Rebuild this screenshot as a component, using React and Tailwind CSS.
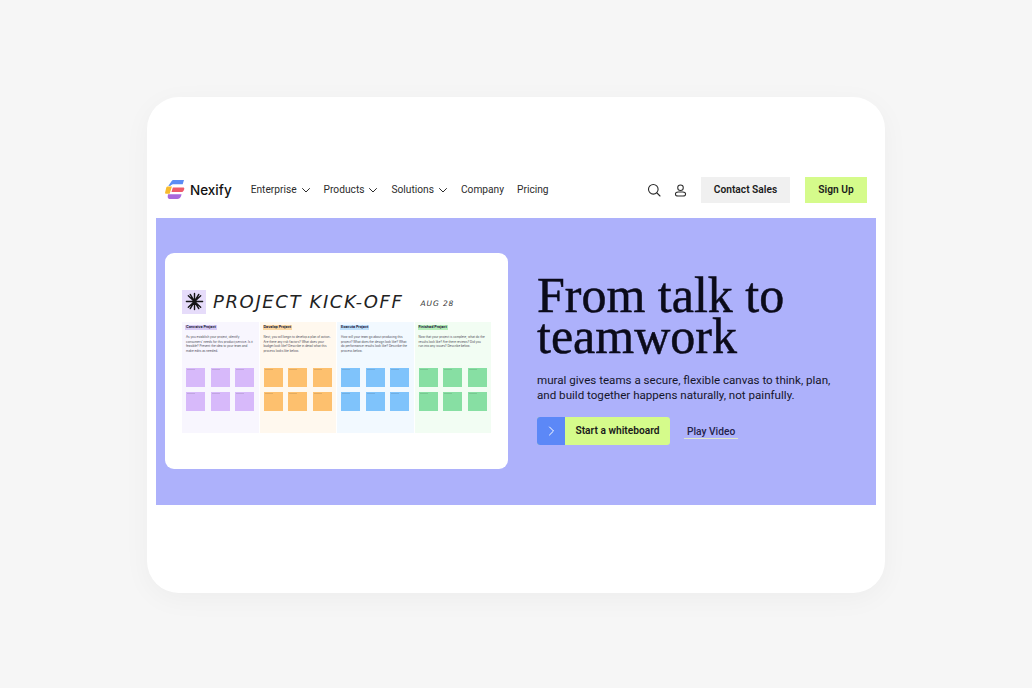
const sans = "font-['Roboto',sans-serif]";

function Chevron() {
  return (
    <svg viewBox="0 0 10 10" className="w-[10px] h-[10px]" fill="none" stroke="currentColor" strokeWidth="1" strokeLinecap="round" strokeLinejoin="round">
      <path d="M1.500 3.500L5 7l3.500-3.500" />
    </svg>
  );
}

function Logo() {
  return (
    <svg viewBox="0 0 20 20" className="w-[20px] h-[20px]">
      <path d="M6.500 1.200C7 .500 7.700 0 8.700 0H19l-1.300 4.300H8.600c-1.300 0-2.300.5-3 1.500L3.300 6.100z" fill="#5b8cf5" />
      <path d="M2.600 6.500h4.300L4.700 13.800H1.200c-.8 0-1.300-.7-1.100-1.400l1.200-4.800C1.500 6.900 2 6.500 2.600 6.500z" fill="#f7bb2e" />
      <path d="M7.800 7.500H18.200c.8 0 1.300.7 1.100 1.400l-.6 1.600c-.3.900-1.100 1.500-2 1.500H6.500z" fill="#ee5b6b" />
      <path d="M3 14.200H16.600l-.6 2c-.5 1.600-1.900 2.800-3.700 2.800H5c-1.500 0-2.500-1.200-2.300-2.600z" fill="#a968dd" />
    </svg>
  );
}

function NavItem({ label, chevron }) {
  return (
    <span className="flex items-center gap-[4px] text-[10.200px] text-[#2c2c2c]">
      {label}
      {chevron && <Chevron />}
    </span>
  );
}

function Column({ title, titleBg, bg, sticky, lines }) {
  const notes = [0, 1, 2, 3, 4, 5];
  return (
    <div className={`w-[77px] h-[111px] flex flex-col px-[4px] pt-[3px] ${bg}`}>
      <span className={`self-start -ml-[1px] px-[1px] text-[3.600px] leading-[5px] font-bold text-[#252540] font-['Inter',sans-serif] ${titleBg}`}>{title}</span>
      <p className="mt-[5px] whitespace-pre text-[3px] leading-[4.700px] text-[#4a4a55] h-[21px] font-['Inter',sans-serif]">{lines}</p>
      <div className="mt-[12px] grid grid-cols-3 gap-x-[5px] gap-y-[5px]">
        {notes.map((n) => (
          <div key={n} className={`w-[19px] h-[19px] pl-[1px] pt-[1px] ${sticky}`}>
            <div className="w-[8px] h-[1px] bg-black/10" />
          </div>
        ))}
      </div>
    </div>
  );
}

export default function App() {
  return (
    <div className={`w-[1032px] h-[688px] bg-[#f6f6f6] flex items-center justify-center pt-[2px] ${sans}`}>
      <div className="w-[738px] h-[496px] bg-white rounded-[32px] shadow-[0_6px_28px_rgba(0,0,0,0.04)] px-[9px] pt-[65px] flex flex-col">
        <header className="h-[56px] shrink-0 flex items-center px-[9px]">
          <Logo />
          <span className="ml-[5px] text-[13.500px] font-medium text-[#111] font-['Inter',sans-serif]">Nexify</span>
          <nav className="ml-[19px] flex items-center gap-[13px]">
            <NavItem label="Enterprise" chevron />
            <NavItem label="Products" chevron />
            <NavItem label="Solutions" chevron />
            <NavItem label="Company" />
            <NavItem label="Pricing" />
          </nav>
          <div className="ml-auto flex items-center">
            <svg viewBox="0 0 14 14" className="w-[14px] h-[14px] text-[#2a2a2a]" fill="none" stroke="currentColor" strokeWidth="1.100" strokeLinecap="round">
              <circle cx="6.300" cy="6.300" r="4.800" />
              <path d="M10 10l3 3" />
            </svg>
            <svg viewBox="0 0 14 14" className="ml-[13px] w-[13px] h-[13px] text-[#2a2a2a]" fill="none" stroke="currentColor" strokeWidth="1.100">
              <circle cx="7" cy="4" r="3" />
              <path d="M4.500 8.500h5c2 0 3 1 3 2.200s-1 2.300-3 2.300h-5c-2 0-3-1-3-2.300s1-2.200 3-2.200z" />
            </svg>
            <button className="ml-[14px] w-[89px] h-[26px] bg-[#f0f0f0] text-[10.200px] font-semibold text-[#1a1a1a]">Contact Sales</button>
            <button className="ml-[15px] w-[62px] h-[26px] bg-[#d5fb8b] text-[10.200px] font-semibold text-[#1a1a1a]">Sign Up</button>
          </div>
        </header>
        <section className="h-[287px] bg-[#adb1fb] flex items-center pl-[9px] pb-[1px]">
          <div className="w-[343px] h-[216px] bg-white rounded-[9px] px-[17px] pt-[36px] flex flex-col">
            <div className="flex items-center h-[25px]">
              <div className="w-[24px] h-[24px] bg-[#e6dcfa] flex items-center justify-center">
                <svg viewBox="0 0 20 20" className="w-[19px] h-[19px]" stroke="#151515" strokeWidth="1.500" strokeLinecap="round">
                  <path d="M10 1.500v17M3.500 4l13 12M16.500 4l-13 12M1.500 10h17M5.500 2.500l9 15M14.500 2.500l-9 15" />
                </svg>
              </div>
              <span className="ml-[7px] text-[18px] leading-none tracking-[0.090em] italic font-extralight text-[#222] font-['DejaVu_Sans',sans-serif]">PROJECT KICK-OFF</span>
              <span className="ml-[17px] mt-[5px] text-[7.500px] tracking-[0.120em] italic text-[#333] font-['DejaVu_Sans',sans-serif]">AUG 28</span>
            </div>
            <div className="mt-[8px] flex gap-[1px]">
              <Column title="Conceive Project" titleBg="bg-[#d9ccf5]" bg="bg-[#f8f6fe]" sticky="bg-[#d7b9fa]" lines={"As you establish your project, identify\nconsumers' needs for this product/service. Is it\nfeasible? Present the idea to your team and\nmake edits as needed."} />
              <Column title="Develop Project" titleBg="bg-[#fbd7a2]" bg="bg-[#fff8ee]" sticky="bg-[#fdc06e]" lines={"Next, you will begin to develop a plan of action.\nAre there any risk factors? What does your\nbudget look like? Describe in detail what this\nprocess looks like below."} />
              <Column title="Execute Project" titleBg="bg-[#bfe0fb]" bg="bg-[#f2f9ff]" sticky="bg-[#7fc3fb]" lines={"How will your team go about producing this\nproject? What does the design look like? What\ndo performance results look like? Describe the\nprocess below."} />
              <Column title="Finished Project" titleBg="bg-[#b6eeb9]" bg="bg-[#f2fdf3]" sticky="bg-[#87dfa3]" lines={"Now that your project is complete, what do the\nresults look like? Are there reviews? Did you\nrun into any issues? Describe below."} />
            </div>
          </div>
          <div className="ml-[29px] mb-[3px] flex flex-col">
            <h1 className="text-[50px] leading-[41px] text-[#0b0b1a] [-webkit-text-stroke:0.5px_#0b0b1a] font-['Liberation_Serif',serif]">From talk to<br />teamwork</h1>
            <p className="mt-[16px] text-[11.600px] leading-[15px] text-[#15152a]">mural gives teams a secure, flexible canvas to think, plan,<br />and build together happens naturally, not painfully.</p>
            <div className="mt-[14px] flex items-center">
              <div className="flex h-[28px] w-[133px] rounded-[3px] overflow-hidden bg-[#d5fb8b]">
                <span className="w-[28px] bg-[#5c88f7] flex items-center justify-center text-white">
                  <svg viewBox="0 0 10 10" className="w-[10px] h-[10px]" fill="none" stroke="currentColor" strokeWidth="1" strokeLinecap="round" strokeLinejoin="round"><path d="M3.500 1l4 4-4 4" /></svg>
                </span>
                <span className="flex-1 flex items-center justify-center text-[10.200px] font-semibold text-[#1a1a1a]">Start a whiteboard</span>
              </div>
              <span className="ml-[14px] mt-[2px] border-b-[1.500px] border-[#dfe7c8] px-[3px] leading-[13px] text-[10.200px] font-medium text-[#23234a]">Play Video</span>
            </div>
          </div>
        </section>
      </div>
    </div>
  );
}
